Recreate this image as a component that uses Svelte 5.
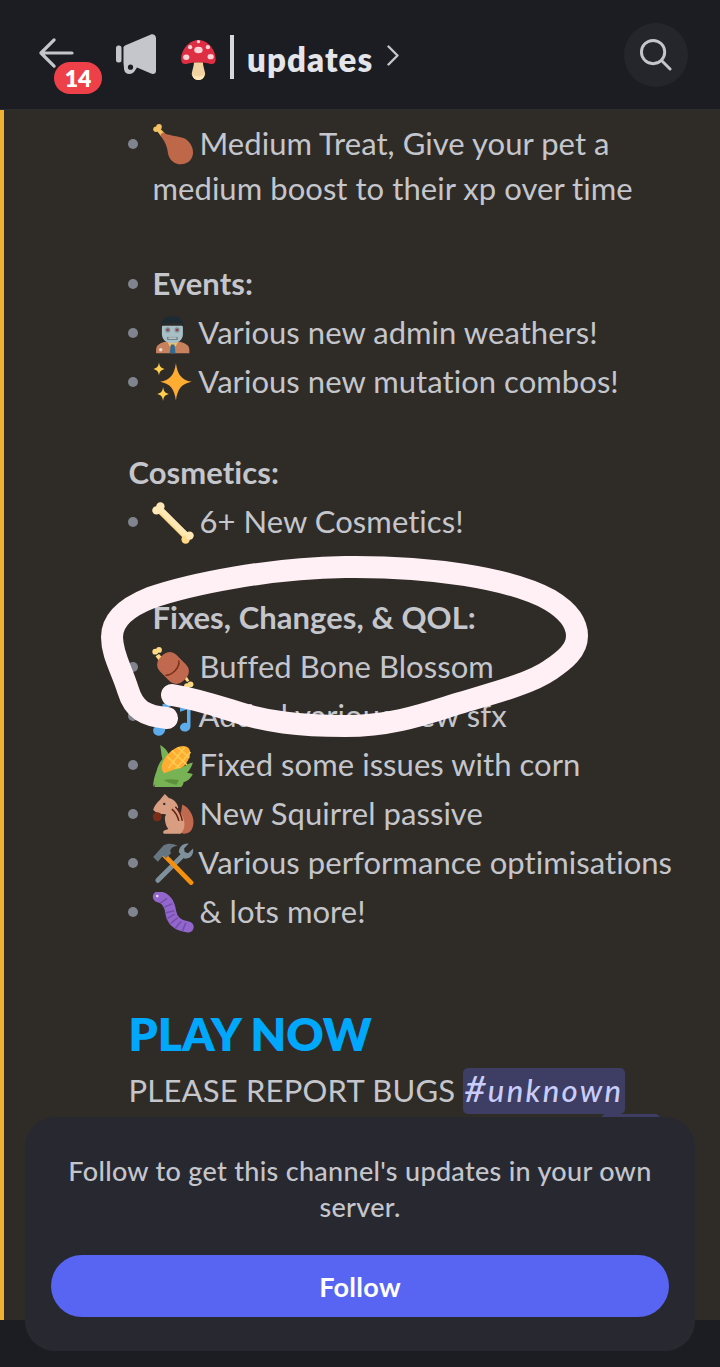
<script>
  const firstRows = [{ icon: 'poultry', text: 'Medium Treat, Give your pet a medium boost to their xp over time' }];
  const events = [
    { icon: 'zombie', text: 'Various new admin weathers!' },
    { icon: 'sparkles', text: 'Various new mutation combos!' }
  ];
  const fixes = [
    { icon: 'meat', text: 'Buffed Bone Blossom' },
    { icon: 'notes', text: 'Added various new sfx' },
    { icon: 'corn', text: 'Fixed some issues with corn' },
    { icon: 'chipmunk', text: 'New Squirrel passive' },
    { icon: 'tools', text: 'Various performance optimisations' },
    { icon: 'bug', text: '& lots more!' }
  ];
</script>

{#snippet emoji(name)}
  <svg class="emoji" viewBox="0 0 36 36" aria-hidden="true">
    {#if name === 'poultry'}
      <circle cx="3.500" cy="4.500" r="2.400" fill="#F4C265"/><circle cx="6" cy="2.500" r="2.400" fill="#F4C265"/>
      <path d="M3.500 5L6 3l5 5-3 3z" fill="#F4C265"/>
      <path d="M9.500 7C13 10 20 9.500 27 12c8 3.500 11 14 5 20-6 5-17 3-18.500-8C13 18 9.500 13 7 9.500z" fill="#BE6849"/>
    {:else if name === 'zombie'}
      <path d="M3.500 34.500v-3c0-4 4-6 9-7h10c5 1 9.500 3 9.500 7v3z" fill="#C8815D"/>
      <path d="M13 24h9.500l-2 4.500h-5.500z" fill="#F4C265"/>
      <path d="M16.200 27h3l1 7.500h-5z" fill="#2F6B93"/>
      <circle cx="7.500" cy="31.500" r="1.500" fill="#E8DCD4"/>
      <path d="M8.500 11h18v7c0 4.500-3.500 8-9 8s-9-3.500-9-8z" fill="#A9BFC6"/>
      <path d="M8 13C7 6 12 2.500 17.500 2.500S28 6 27 13c-1-2.500-1.500-3.500-2.500-4.500-4 .8-10 .8-14 0C9.500 9.500 9 10.500 8 13z" fill="#1E2A31"/>
      <circle cx="13.500" cy="14.500" r="2.200" fill="#7C8F98"/><circle cx="21.500" cy="14.500" r="2.200" fill="#7C8F98"/>
      <circle cx="13.500" cy="14.500" r="1" fill="#A3353B"/><circle cx="21.500" cy="14.500" r="1" fill="#A3353B"/>
      <path d="M13 20.500h9v2.500h-9z" fill="#66757F"/>
      <path d="M14 21h7v1h-7z" fill="#E1E8ED"/>
    {:else if name === 'sparkles'}
      <path d="M20.500 1c1.500 10 4.500 14 13.500 16-9 2-12 6-13.500 16-1.500-10-4.500-14-13.500-16 9-2 12-6 13.500-16z" fill="#FFAC33"/>
      <path d="M6 .5c.5 3.300 1.500 4.500 4.800 5.500C7.500 7 6.500 8.200 6 11.500 5.500 8.200 4.500 7 1.200 6 4.500 5 5.500 3.800 6 .5z" fill="#FFCC4D"/>
      <path d="M9.500 21.500c.5 3.600 1.500 5 5 6-3.500 1-4.500 2.400-5 6-.5-3.600-1.500-5-5-6 3.500-1 4.500-2.400 5-6z" fill="#FFCC4D"/>
    {:else if name === 'bone'}
      <path d="M7 7l22 22" stroke="#FFD983" stroke-width="6"/>
      <path d="M7 7l22 22" stroke="#FFE8B6" stroke-width="4.600" transform="translate(.5 -.5)"/>
      <circle cx="3.800" cy="7.200" r="3.600" fill="#FFE8B6"/><circle cx="7.200" cy="3.800" r="3.600" fill="#FFE8B6"/>
      <circle cx="28.800" cy="32.200" r="3.600" fill="#FFD983"/><circle cx="32.200" cy="28.800" r="3.600" fill="#FFE8B6"/>
    {:else if name === 'meat'}
      <path d="M3 8L6 6l4 4-3 3zM27 26l3 4 2-1-3-5z" fill="#FFD983"/>
      <circle cx="2.800" cy="4" r="2.500" fill="#FFD983"/><circle cx="6" cy="2.500" r="2.500" fill="#FFD983"/>
      <circle cx="33" cy="32" r="2.500" fill="#FFD983"/><circle cx="30" cy="33.500" r="2.500" fill="#FFD983"/>
      <rect x="4" y="8" width="28" height="20" rx="8" fill="#C1694F" transform="rotate(45 18 18)"/>
      <path d="M23 12c.5 3-1 6-3.500 8.500-2 2-4.500 3.500-7.500 3.700" fill="none" stroke="#7A2E17" stroke-width="1.300" stroke-linecap="round"/>
    {:else if name === 'notes'}
      <path d="M9 7l12-4v4L11.500 10.500V28c0 3-2.500 6-5.500 6s-5-2-5-4.500 3-5 5.500-5c1 0 1.800.2 2.500.5z" fill="#5DADEC"/>
      <path d="M24 10l9-3v19c0 2.500-2 4.500-4.500 4.500S24 29 24 27s2-4 4.500-4c.6 0 1.200.1 1.500.3V11.500l-6 2z" fill="#5DADEC"/>
    {:else if name === 'corn'}
      <path d="M7 0c5 3 7 6 9 12l1 12-12 8c-3 2-4 4-4 4 0-5 1-9 3-14 1-4 3-8 5-10-1-3-1-6-2-12z" fill="#77B255"/>
      <ellipse cx="20.500" cy="13" rx="15" ry="8.500" fill="#FFAC33" transform="rotate(-45 20.500 13)"/>
      <path d="M13 10l12 11M17 5l13 12M22 2l10 9M14 20L28 2M18 23L33 6" stroke="#FFCC4D" stroke-width="1.300" fill="none"/>
      <path d="M2 36c1-4 3-7 6-10 5-3 10-5 16-6 3-1 6-4 11-5-1 4-3 7-5 9 1 0 4 .5 5 1-2 4-5 6-8 7 0 2-1 3-2 4z" fill="#77B255"/>
      <path d="M10 30c4-1 8-1 13 0l-2 4c-4-.5-8-2-11-4z" fill="#5C913B"/>
    {:else if name === 'chipmunk'}
      <path d="M26 9c5 2 10 9 9.500 16-.5 6-3.500 9-8 9-3 0-5-2-5-5z" fill="#C1694F"/>
      <path d="M15 11c6 .5 11 5 12.500 12 1 5-.5 9-3 11H11c-1.500 0-2-2-.5-2.800L14 30c-2-2-3-6-3-10z" fill="#D99E82"/>
      <path d="M11 0l3.500 3.500c4 1 7 4 8 8-1 3-5 6-10 6-5 0-9-1-11.500-4 1-3 3-6 6-8.500 1-2 2.500-3 4-5z" fill="#D99E82"/>
      <circle cx="4.500" cy="19.500" r="3.800" fill="#7A2E17"/>
      <path d="M20 11c3 3 5 7 6 12M17 13c3 2.500 5 6 6 10" stroke="#662113" stroke-width="1.300" fill="none"/>
      <circle cx="10.500" cy="8.500" r="1" fill="#292F33"/>
    {:else if name === 'tools'}
      <path d="M5 32L27 10" stroke="#7E909B" stroke-width="4.200" stroke-linecap="round"/>
      <path d="M23 8c0-4 3-8 8.500-7.500l-4 4.200.5 3 3 1 4.200-4C36 10 33 13.500 28 13.500z" fill="#7E909B"/>
      <path d="M10 10l23.500 24" stroke="#F4900C" stroke-width="4" stroke-linecap="round"/>
      <path d="M1 12L10 2c3-2 8-2 12 .5-3 0-5 1-6 3-.5 1-.5 2 .5 3L12 13l-2.500-2L5 16z" fill="#66757F"/>
    {:else if name === 'bug'}
      <path d="M5.500 4C12 5 15 10 16 17c1 8 6 12 15 13" fill="none" stroke="#9266CC" stroke-width="9.500" stroke-linecap="round"/>
      <path d="M7 9.500l6-4M10.500 13l7-3M11 18l8-2M12.500 23l7-4M16 27l6-5M20 31l5-6M26 33.500l3-7" stroke="#744EAA" stroke-width="1.300" fill="none"/>
      <circle cx="4.500" cy="3.500" r="1.200" fill="#E1D5F5"/>
    {:else if name === 'mushroom'}
      <path d="M13.500 20h8c0 3 1.500 7 2 10 .3 3-2.500 6-6 6s-6.300-3-6-6c.5-3 2-7 2-10z" fill="#F3D2A2"/>
      <path d="M12.500 31.500c1.500 1.500 8.500 1.500 10 0 0 3-2 4.500-5 4.500s-5-1.500-5-4.500z" fill="#FFE8B6"/>
      <path d="M17.500 0C9 0 2 9 2 17c0 3.500 1.500 5 4.500 4.500 3.500-.8 7-1.500 11-1.500s7.500.7 11 1.500c3 .5 4.500-1 4.500-4.500C33 9 26 0 17.500 0z" fill="#DD2E44"/>
      <ellipse cx="17.500" cy="9" rx="3.800" ry="3" fill="#FBD3D7"/><ellipse cx="6.500" cy="15.500" rx="2.800" ry="2.400" fill="#FBD3D7"/><ellipse cx="28.500" cy="15" rx="2.800" ry="2.400" fill="#FBD3D7"/><circle cx="26" cy="6.500" r="1.900" fill="#FBD3D7"/><circle cx="10" cy="6.500" r="1.900" fill="#FBD3D7"/><circle cx="17.500" cy="1.500" r="1.500" fill="#FBD3D7"/>
    {/if}
  </svg>
{/snippet}

{#snippet row(item)}
  <li class="bulleted">{@render emoji(item.icon)} {item.text}</li>
{/snippet}

<div class="screen">
  <header class="top">
    <div class="back">
      <svg class="arrow" viewBox="0 0 38 34" aria-hidden="true">
        <path d="M17 3L3 17l14 14M3 17h33" fill="none" stroke="#c4c6cc" stroke-width="3.400" stroke-linecap="round" stroke-linejoin="round"/>
      </svg>
      <span class="badge">14</span>
    </div>
    <svg class="horn" viewBox="0 0 40 40" aria-hidden="true">
      <rect x="0" y="11.500" width="5.500" height="17" rx="2.500" fill="#c4c6cc"/>
      <path d="M9 11.500L35 .5C37-.3 40 1 40 4v33c0 2.500-2.500 3.500-5 2.500l-14-6-3 4.500c-3 3-9 2.500-9.800-2L7.500 29V13z" fill="#c4c6cc"/>
      <circle cx="14.500" cy="33.200" r="2.600" fill="#1c1d22"/>
    </svg>
    <span class="shroom">{@render emoji('mushroom')}</span>
    <span class="divider"></span>
    <span class="name">updates</span>
    <svg class="chev" viewBox="0 0 12 21" aria-hidden="true">
      <path d="M1.500 1.500l9 9-9 9" fill="none" stroke="#c4c6cc" stroke-width="2.400" stroke-linecap="round" stroke-linejoin="round"/>
    </svg>
    <button class="search" aria-label="Search">
      <svg viewBox="0 0 34 34" aria-hidden="true">
        <circle cx="14.500" cy="14.500" r="12" fill="none" stroke="#c4c6cc" stroke-width="3"/>
        <path d="M23.500 23.500L32 32" stroke="#c4c6cc" stroke-width="3" stroke-linecap="round"/>
      </svg>
    </button>
  </header>

  <main class="feed">
    <ul class="list">
      {#each firstRows as item}{@render row(item)}{/each}
    </ul>
    <ul class="list events">
      <li class="bulleted"><strong>Events:</strong></li>
      {#each events as item}{@render row(item)}{/each}
    </ul>
    <p class="label cosmetics"><strong>Cosmetics:</strong></p>
    <ul class="list">
      {@render row({ icon: 'bone', text: '6+ New Cosmetics!' })}
    </ul>
    <ul class="list fixes">
      <li><strong>Fixes, Changes, &amp; QOL:</strong></li>
      {#each fixes as item}{@render row(item)}{/each}
    </ul>
    <h1 class="play">PLAY NOW</h1>
    <p class="report">PLEASE REPORT BUGS <span class="mention"><span class="hash">#</span>unknown</span></p>
    <div class="next"><span class="stub"></span></div>
  </main>

  <div class="base"></div>

  <svg class="scribble" viewBox="0 0 720 1367" aria-hidden="true">
    <path d="M167 718C145 716 134 710 128 690C122 670 112 655 112 637C112 620 125 608 150 598C190 584 270 568 345 567C430 566 510 578 550 600C570 612 577 624 577 636C577 650 565 660 550 670C530 684 490 694 460 703C430 712 395 726 345 726C300 726 265 722 230 710C205 702 190 698 172 695" fill="none" stroke="#fff0f5" stroke-width="22" stroke-linecap="round" stroke-linejoin="round"/>
  </svg>

  <aside class="card">
    <p>Follow to get this channel's updates in your own server.</p>
    <button class="follow">Follow</button>
  </aside>
</div>

<style>
  :global(body) { margin: 0; background: #1c1d22; }
  .screen {
    position: relative;
    width: 720px;
    height: 1367px;
    overflow: hidden;
    display: flex;
    flex-direction: column;
    font-family: Lato, "Noto Sans", sans-serif;
    color: #c4c6cc;
    font-size: 31px;
    letter-spacing: 0.05px;
    line-height: 45px;
  }
  .top {
    flex: none;
    height: 110px;
    box-sizing: border-box;
    border-bottom: 1px solid #2b2c32;
    background: #1c1d22;
    display: flex;
    align-items: center;
    padding: 6px 32px 0 38px;
  }
  .back { position: relative; width: 36px; height: 32px; margin-top: -9px; flex: none; }
  .arrow { width: 36px; height: 32px; display: block; }
  .badge {
    position: absolute;
    left: 16px;
    top: 25px;
    width: 48px;
    height: 32px;
    border-radius: 16px;
    background: #ed4048;
    color: #fff;
    font-size: 23px;
    letter-spacing: 0;
    font-weight: 800;
    line-height: 32px;
    text-align: center;
  }
  .horn { width: 40px; height: 40px; margin-left: 42px; margin-top: -8px; flex: none; }
  .shroom { width: 40px; height: 40px; margin-left: 23px; margin-top: 4px; display: block; flex: none; }
  .shroom .emoji { width: 40px; height: 40px; margin: 0; vertical-align: top; display: block; }
  .divider { width: 4px; height: 44px; background: #d6d8de; margin-left: 11px; margin-top: -2px; flex: none; }
  .name { font-size: 33px; letter-spacing: 1.100px; font-weight: 800; color: #e4e5ea; margin-left: 13px; margin-top: 4px; }
  .chev { width: 12px; height: 21px; margin-left: 14px; margin-top: -4px; flex: none; }
  .search {
    margin-left: auto;
    width: 64px;
    height: 64px;
    border: 0;
    padding: 15px;
    border-radius: 50%;
    background: #25262c;
    margin-top: -6px;
    flex: none;
  }
  .search svg { width: 33px; height: 33px; display: block; }

  .feed {
    flex: 1;
    min-height: 0;
    overflow: hidden;
    background: #2f2c28;
    border-left: 4px solid #f0b232;
    padding: 11px 0 0 124.500px;
  }
  .list { list-style: none; margin: 0; padding: 0 26px 0 24px; }
  .list li { position: relative; margin-top: 4px; }
  .list li:first-child { margin-top: 0; }
  .bulleted::before {
    content: "";
    position: absolute;
    left: -24.500px;
    top: 18px;
    width: 10px;
    height: 10px;
    border-radius: 50%;
    background: #80848e;
  }
  .emoji {
    width: 42px;
    height: 42px;
    vertical-align: -11px;
    margin-left: -1px;
    margin-right: -2px;
  }
  strong { font-weight: 700; }
  .events { margin-top: 50px; }
  .label { margin: 0; }
  .cosmetics { margin-top: 46px; margin-bottom: 4px; }
  .fixes { margin-top: 51px; }
  .play {
    margin: 72px 0 0;
    font-size: 46px;
    letter-spacing: 0;
    line-height: 56px;
    font-weight: 800;
    color: #00a8fc;
  }
  .report { margin: 6px 0 0; white-space: nowrap; letter-spacing: 0.2px; height: 46px; }
  .mention {
    display: inline-block;
    height: 46px;
    box-sizing: border-box;
    width: 162px;
    padding-left: 1px;
    border-radius: 5px;
    background: #3e3d63;
    color: #c9cdfb;
    font-style: italic;
    font-weight: 500;
    letter-spacing: 2.300px;
    white-space: nowrap;
    vertical-align: top;
  }
  .hash { font-size: 37px; line-height: 40px; letter-spacing: 2px; }
  .next { margin: 0; padding-left: 472px; height: 40px; }
  .stub { display: block; width: 59px; height: 40px; border-radius: 5px; background: #3e3d63; }
  .base { flex: none; height: 47px; background: #1c1d22; }

  .scribble { position: absolute; inset: 0; width: 720px; height: 1367px; pointer-events: none; }

  .card {
    position: absolute;
    left: 25px;
    top: 1117px;
    width: 670px;
    height: 234px;
    box-sizing: border-box;
    padding: 36px 26px 0;
    border-radius: 30px;
    background: #282930;
    text-align: center;
  }
  .card p { margin: 0; padding: 0 14px; font-size: 27px; letter-spacing: 0.3px; line-height: 36px; font-weight: 500; }
  .follow {
    display: block;
    width: 100%;
    height: 62px;
    margin-top: 30px;
    border: 0;
    border-radius: 31px;
    background: #5865f2;
    color: #fff;
    font: 700 27px/62px Lato, "Noto Sans", sans-serif;
    letter-spacing: 0.3px;
  }
</style>
